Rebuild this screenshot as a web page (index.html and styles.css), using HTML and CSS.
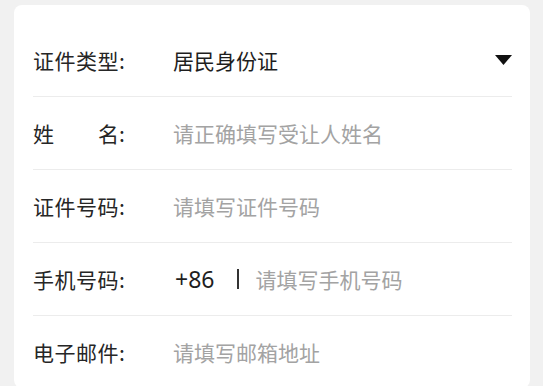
FILE: index.html
```html
<!DOCTYPE html>
<html lang="zh-CN">
<head>
<meta charset="utf-8">
<link rel="stylesheet" href="styles.css">
</head>
<body>
<div class="card">
  <div class="row">
    <div class="label">证件类型:</div>
    <div class="value">居民身份证</div>
    <svg class="caret" width="17" height="10" viewBox="0 0 17 10"><polygon points="0,0 17,0 8.5,10" fill="#111"/></svg>
  </div>
  <div class="row">
    <div class="label"><span class="spread"><span>姓</span><span>名</span></span>:</div>
    <div class="placeholder">请正确填写受让人姓名</div>
  </div>
  <div class="row">
    <div class="label">证件号码:</div>
    <div class="placeholder">请填写证件号码</div>
  </div>
  <div class="row">
    <div class="label">手机号码:</div>
    <div class="value code">+86</div>
    <span class="bar"></span>
    <div class="placeholder">请填写手机号码</div>
  </div>
  <div class="row last">
    <div class="label">电子邮件:</div>
    <div class="placeholder">请填写邮箱地址</div>
  </div>
</div>
</body>
</html>
```
FILE: styles.css
```css
html, body {
  margin: 0;
  padding: 0;
  background: #f1f1f1;
  height: 100%;
  overflow: hidden;
}
body {
  font-family: "Noto Sans CJK SC", "Noto Sans", sans-serif;
  font-size: 21px;
}
.card {
  margin: 5px 0 0 14px;
  width: 516px;
  background: #fff;
  border-radius: 8px;
  padding: 19px 18px 0 19px;
  box-sizing: border-box;
}
.row {
  height: 72px;
  border-bottom: 1px solid #ececec;
  display: flex;
  align-items: center;
}
.row.last {
  border-bottom: none;
}
.label {
  width: 140px;
  flex: none;
  color: #262626;
  letter-spacing: 0.5px;
  display: flex;
  align-items: center;
  white-space: nowrap;
}
.spread {
  display: flex;
  justify-content: space-between;
  width: 86px;
  letter-spacing: 0;
}
.value {
  color: #1e1e1e;
  flex: 1;
}
.value.code {
  flex: none;
  font-family: "Noto Sans", sans-serif;
  font-size: 23px;
  margin-left: 2px;
}
.placeholder {
  color: #a3a3a3;
}
.caret {
  flex: none;
}
.bar {
  width: 2px;
  height: 20px;
  background: #333;
  margin: 0 16px 0 23px;
  flex: none;
}
```
